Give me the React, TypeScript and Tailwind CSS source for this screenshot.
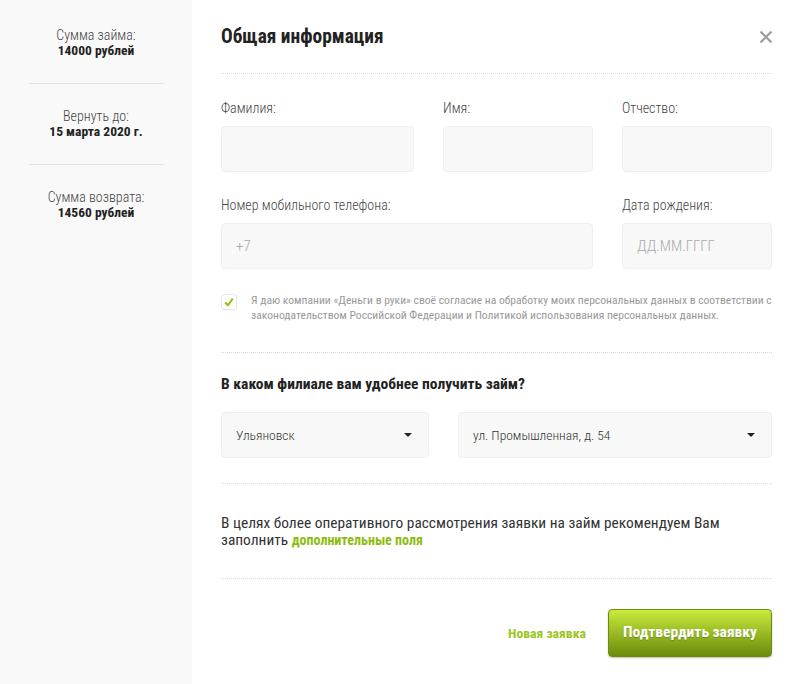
import { useState } from "react";

const font = { fontFamily: "'Roboto Condensed', Roboto, 'Liberation Sans', sans-serif" };

type SummaryItem = { label: string; value: string };

const summary: SummaryItem[] = [
  { label: "Сумма займа:", value: "14000 рублей" },
  { label: "Вернуть до:", value: "15 марта 2020 г." },
  { label: "Сумма возврата:", value: "14560 рублей" },
];

function Field({ label, placeholder, className }: { label: string; placeholder?: string; className?: string }) {
  return (
    <div className={className}>
      <div className="text-[14px] font-light leading-4 text-[#444] mb-[10px]">{label}</div>
      <div className="h-[46px] rounded-[4px] bg-[#f8f8f8] border border-[#efefef] flex items-center px-[14px] text-[15px] font-light text-[#aaa]">
        {placeholder}
      </div>
    </div>
  );
}

function Select({ value, className }: { value: string; className?: string }) {
  return (
    <div className={`h-[46px] rounded-[4px] bg-[#f8f8f8] border border-[#efefef] flex items-center justify-between pl-[14px] pr-[16px] text-[13.5px] font-light text-[#333] ${className ?? ""}`}>
      <span>{value}</span>
      <span className="w-0 h-0 border-l-[4px] border-r-[4px] border-t-[4px] border-l-transparent border-r-transparent border-t-[#222]" />
    </div>
  );
}

export default function App() {
  const [agree, setAgree] = useState(true);

  return (
    <div className="flex w-[800px] h-[684px] bg-white overflow-hidden" style={font}>
      {/* sidebar */}
      <aside className="w-[192px] shrink-0 bg-[#f9f9f9] pt-[3px]">
        {summary.map((item, i) => (
          <div
            key={item.label}
            className={`mx-auto w-[135px] py-[25px] text-center text-[13.5px] leading-[15px] ${i < summary.length - 1 ? "border-b border-[#e2e2e2]" : ""}`}
          >
            <div className="text-[#444] font-light text-[14px]">{item.label}</div>
            <div className="font-bold text-[#222]">{item.value}</div>
          </div>
        ))}
      </aside>

      {/* main form */}
      <main className="flex-1 pl-[29px] pr-[28px]">
        <div className="h-[74px] flex items-center justify-between border-b border-dotted border-[#d9d9d9]">
          <h1 className="text-[19.4px] font-bold text-[#222]">Общая информация</h1>
          <svg width="14" height="14" viewBox="0 0 14 14" className="mr-[-1px]">
            <path d="M1.5 1.5 L12.5 12.5 M12.5 1.5 L1.5 12.5" stroke="#9c9c9c" strokeWidth="2.2" />
          </svg>
        </div>

        <div className="flex gap-[29px] pt-[26px]">
          <Field label="Фамилия:" className="w-[193px]" />
          <Field label="Имя:" className="w-[150px]" />
          <Field label="Отчество:" className="w-[150px]" />
        </div>

        <div className="flex gap-[29px] pt-[25px]">
          <Field label="Номер мобильного телефона:" placeholder="+7" className="w-[372px]" />
          <Field label="Дата рождения:" placeholder="ДД.ММ.ГГГГ" className="w-[150px]" />
        </div>

        <div className="flex gap-[14px] pt-[24px] pb-[29px] border-b border-dotted border-[#d9d9d9]">
          <button
            onClick={() => setAgree(!agree)}
            className="w-[16px] h-[16px] shrink-0 mt-[1px] rounded-[3px] bg-white border border-[#e6e6e6] flex items-center justify-center"
          >
            {agree && (
              <svg width="10" height="10" viewBox="0 0 10 10">
                <path d="M1.2 5.5 L4 8.3 L8.8 1.5" fill="none" stroke="#8cc011" strokeWidth="2" />
              </svg>
            )}
          </button>
          <p className="text-[11.6px] leading-[15px] text-[#999]">
            Я даю компании «Деньги в руки» своё согласие на обработку моих персональных данных в соответствии с
            законодательством Российской Федерации и Политикой использования персональных данных.
          </p>
        </div>

        <div className="pt-[22px] pb-[25px] border-b border-dotted border-[#d9d9d9]">
          <h2 className="text-[15.5px] leading-[18px] font-bold text-[#222]">В каком филиале вам удобнее получить займ?</h2>
          <div className="flex gap-[29px] mt-[19px]">
            <Select value="Ульяновск" className="w-[208px]" />
            <Select value="ул. Промышленная, д. 54" className="flex-1" />
          </div>
        </div>

        <p className="pt-[31px] pb-[29px] text-[15.4px] leading-[17px] text-[#333] border-b border-dotted border-[#d9d9d9]">
          В целях более оперативного рассмотрения заявки на займ рекомендуем Вам
          <br />
          заполнить <span className="text-[14px] font-bold text-[#8cbd10]">дополнительные поля</span>
        </p>

        <div className="flex items-center justify-end gap-[22px] pt-[30px]">
          <span className="text-[13.7px] font-bold text-[#9cc51f]">Новая заявка</span>
          <button className="h-[48px] w-[164px] rounded-[4px] border border-[#6e8c0c] bg-gradient-to-b from-[#c9ec3c] to-[#6c8b0a] text-white text-[15.5px] font-bold shadow-[0_1px_2px_rgba(0,0,0,0.25)] [text-shadow:0_1px_1px_rgba(0,0,0,0.2)]">
            Подтвердить заявку
          </button>
        </div>
      </main>
    </div>
  );
}
